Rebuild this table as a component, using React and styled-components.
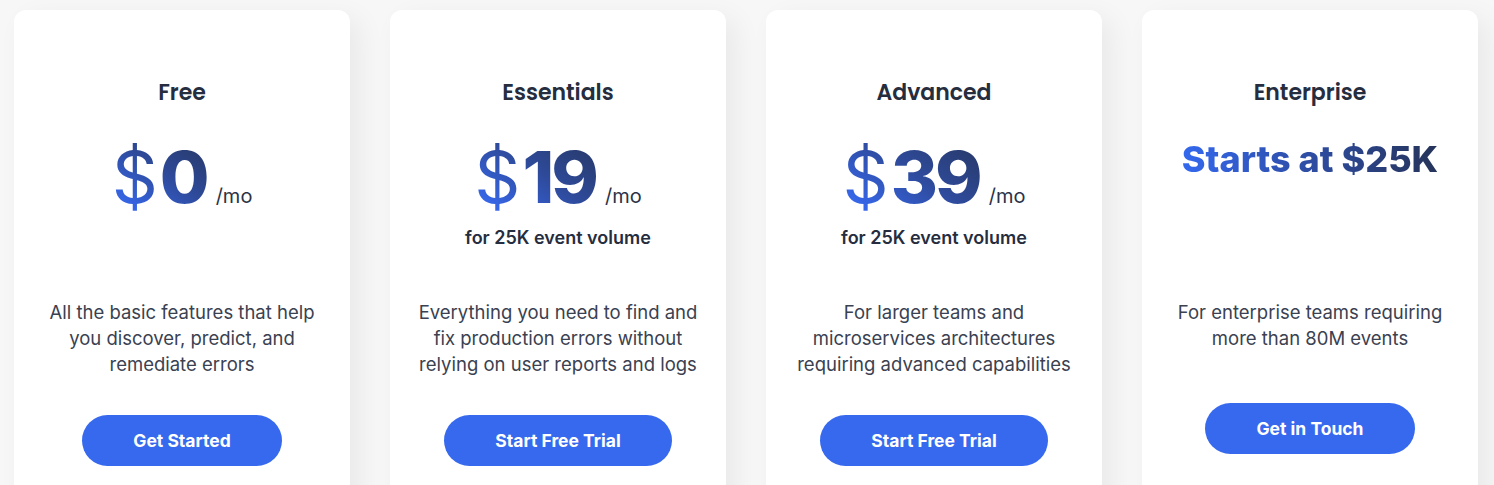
import styled, { createGlobalStyle } from "styled-components";

const GlobalStyle = createGlobalStyle`
    body {
        margin: 0;
        background: #f7f7f7;
        font-family: Inter, "Noto Sans", sans-serif;
    }
`

const Page = styled.div`
    display: grid;
    grid-template-columns: repeat(4, 336px);
    gap: 40px;
    padding: 10px 14px 0;
    height: 485px;
    overflow: hidden;
    box-sizing: border-box;
`
const Card = styled.div`
    display: flex;
    flex-direction: column;
    align-items: center;
    background: #fff;
    border-radius: 12px;
    padding: 68px 20px 40px;
    height: 520px;
    box-sizing: border-box;
    box-shadow: 10px 8px 28px rgba(0, 0, 0, 0.06);
`
const Title = styled.h3`
    margin: 0;
    font-family: Poppins, Inter, sans-serif;
    font-size: 22px;
    font-weight: 600;
    line-height: 30px;
    color: #252d3f;
`
const PriceArea = styled.div`
    display: flex;
    flex-direction: column;
    align-items: center;
    min-height: 191px;
`
const PriceRow = styled.div`
    display: flex;
    align-items: baseline;
    margin-top: 33px;
`
const Amount = styled.span`
    font-size: 72px;
    line-height: 1;
    font-weight: 800;
    letter-spacing: -3px;
    background: linear-gradient(35deg, #3768ec 10%, #2e4a9a 55%, #273864 100%);
    -webkit-background-clip: text;
    background-clip: text;
    color: transparent;
`
const Dollar = styled.span`
    font-weight: 400;
    letter-spacing: 0;
    margin-right: 2px;
`
const Per = styled.span`
    font-size: 20px;
    color: #2b3347;
    margin-left: 9px;
`
const Volume = styled.div`
    margin-top: 13px;
    font-size: 18px;
    line-height: 24px;
    font-weight: 600;
    color: #252d3f;
`
const Quote = styled.div`
    margin-top: 33px;
    font-size: 36px;
    line-height: 1;
    font-weight: 800;
    background: linear-gradient(90deg, #3368ee 0%, #2e4da3 50%, #26345a 100%);
    -webkit-background-clip: text;
    background-clip: text;
    color: transparent;
`
const Description = styled.p`
    margin: 0;
    font-size: 18.5px;
    line-height: 26px;
    color: #3a4151;
    text-align: center;
`
const Button = styled.button`
    margin-top: ${p => p.$gap}px;
    height: 51px;
    padding: 0 51px;
    border: none;
    border-radius: 26px;
    background: #3669ee;
    color: #fff;
    font-family: Inter, sans-serif;
    font-size: 17.5px;
    font-weight: 700;
    cursor: pointer;
`

const plans = [
    {
        name: "Free",
        price: "0",
        lines: ["All the basic features that help", "you discover, predict, and", "remediate errors"],
        cta: "Get Started",
    },
    {
        name: "Essentials",
        price: "19",
        volume: "for 25K event volume",
        lines: ["Everything you need to find and", "fix production errors without", "relying on user reports and logs"],
        cta: "Start Free Trial",
    },
    {
        name: "Advanced",
        price: "39",
        volume: "for 25K event volume",
        lines: ["For larger teams and", "microservices architectures", "requiring advanced capabilities"],
        cta: "Start Free Trial",
    },
    {
        name: "Enterprise",
        quote: "Starts at $25K",
        lines: ["For enterprise teams requiring", "more than 80M events"],
        cta: "Get in Touch",
    },
]

const PlanCard = ({ plan }) => {
    return (
        <Card>
            <Title>{plan.name}</Title>
            <PriceArea>
                {plan.quote ? (
                    <Quote>{plan.quote}</Quote>
                ) : (
                    <PriceRow>
                        <Amount><Dollar>$</Dollar>{plan.price}</Amount>
                        <Per>/mo</Per>
                    </PriceRow>
                )}
                {plan.volume && <Volume>{plan.volume}</Volume>}
            </PriceArea>
            <Description>
                {plan.lines.map((l, i) => (
                    <span key={i}>{l}{i < plan.lines.length - 1 && <br />}</span>
                ))}
            </Description>
            <Button $gap={plan.lines.length === 2 ? 52 : 38}>{plan.cta}</Button>
        </Card>
    )
}

const App = () => {
    return (
        <>
            <GlobalStyle />
            <Page>
                {plans.map(p => <PlanCard key={p.name} plan={p} />)}
            </Page>
        </>
    )
}

export default App;
